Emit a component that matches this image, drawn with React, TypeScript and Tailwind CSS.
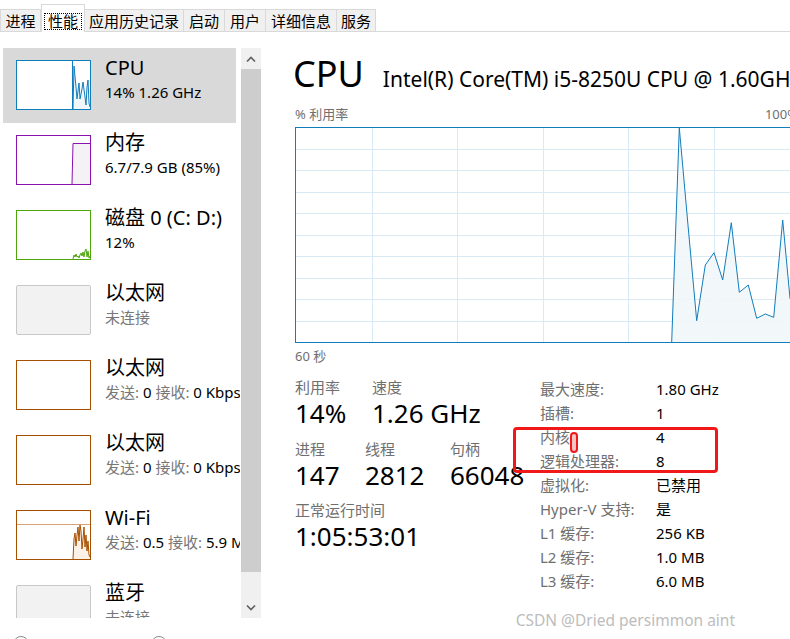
import React from 'react';

const tabs = [
  { label: '进程', w: 'w-[41px]' },
  { label: '性能', w: 'w-[44px]', active: true },
  { label: '应用历史记录', w: 'w-[100px]' },
  { label: '启动', w: 'w-[42px]' },
  { label: '用户', w: 'w-[42px]' },
  { label: '详细信息', w: 'w-[72px]' },
  { label: '服务', w: 'w-[40px]' },
];

function Tabs() {
  return (
    <div className="flex h-[32px] items-end border-b border-[#d9d9d9]">
      {tabs.map((t) =>
        t.active ? (
          <div
            key={t.label}
            className={`${t.w} relative z-10 -mb-px flex h-[28px] shrink-0 items-start justify-center border border-b-0 border-[#d9d9d9] bg-white pt-[8px]`}
          >
            <span className="border border-dotted border-black px-[3px] text-[15px] leading-[15px] text-black">{t.label}</span>
          </div>
        ) : (
          <div
            key={t.label}
            className={`${t.w} -ml-px flex h-[22px] shrink-0 items-center justify-center border border-b-0 border-[#d9d9d9] bg-[#f0f0f0] text-[15px] leading-[20px] text-black first:ml-0`}
          >
            {t.label}
          </div>
        )
      )}
    </div>
  );
}

function Box({ color, children, bg = 'bg-white' }: { color: string; children?: React.ReactNode; bg?: string }) {
  return (
    <div className={`relative h-[50px] w-[75px] border ${color} ${bg}`}>
      {children}
    </div>
  );
}

const cpuThumb = (
  <Box color="border-[#117dbb]">
    <svg width="73" height="48" className="block">
      <line x1="55.5" y1="0" x2="55.5" y2="48" stroke="#117dbb" strokeWidth="1" />
      <polygon
        points="56,48 57,5 59,26 60,38 62,22 63,38 65,28 66,21 68,36 69,44 70,26 71,19 72,42 73,46 73,48"
        fill="#f1f6fa"
      />
      <polyline
        points="56,48 57,5 59,26 60,38 62,22 63,38 65,28 66,21 68,36 69,44 70,26 71,19 72,42 73,46"
        fill="none"
        stroke="#117dbb"
        strokeWidth="1"
      />
    </svg>
  </Box>
);

const memThumb = (
  <Box color="border-[#8b12ae]">
    <svg width="73" height="48" className="block">
      <polygon points="55,48 56,7 73,7 73,48" fill="#f4f2f4" />
      <polyline points="55,48 56,7.5 73,7.5" fill="none" stroke="#8b12ae" strokeWidth="1" />
    </svg>
  </Box>
);

const diskThumb = (
  <Box color="border-[#4da60c]">
    <svg width="73" height="48" className="block">
      <polyline
        points="56,48 57,44 58,46 59,43 60,46 61,45 62,47 63,44 64,42 65,45 66,41 67,46 68,40 69,38 70,46 71,40 72,47 73,45"
        fill="none"
        stroke="#4da60c"
        strokeWidth="1"
      />
    </svg>
  </Box>
);

const offThumb = <div className="h-[50px] w-[75px] rounded-[2px] border border-[#c8c8c8] bg-[#f2f2f2]" />;

const ethThumb = <Box color="border-[#a74f01]" />;

const wifiThumb = (
  <Box color="border-[#a74f01]">
    <svg width="73" height="48" className="block">
      <line x1="0" y1="13.5" x2="73" y2="13.5" stroke="#d9a375" strokeWidth="1" />
      <polygon
        points="56,48 57,28 58,22 59,35 60,24 61,16 62,30 63,14 64,20 65,38 66,28 67,16 68,36 69,24 70,40 71,30 72,44 73,46 73,48"
        fill="#fcf1e7"
      />
      <polyline
        points="56,48 57,28 58,22 59,35 60,24 61,16 62,30 63,14 64,20 65,38 66,28 67,16 68,36 69,24 70,40 71,30 72,44 73,46"
        fill="none"
        stroke="#a74f01"
        strokeWidth="1"
      />
    </svg>
  </Box>
);

const G = ({ children }: { children: React.ReactNode }) => <span className="text-[#777777]">{children}</span>;

const items = [
  { thumb: cpuThumb, title: 'CPU', sub: <span>14% 1.26 GHz</span>, selected: true },
  { thumb: memThumb, title: '内存', sub: <span>6.7/7.9 GB (85%)</span> },
  { thumb: diskThumb, title: '磁盘 0 (C: D:)', sub: <span>12%</span> },
  { thumb: offThumb, title: '以太网', sub: <G>未连接</G> },
  { thumb: ethThumb, title: '以太网', sub: <span><G>发送:</G> 0 <G>接收:</G> 0 Kbps</span> },
  { thumb: ethThumb, title: '以太网', sub: <span><G>发送:</G> 0 <G>接收:</G> 0 Kbps</span> },
  { thumb: wifiThumb, title: 'Wi-Fi', sub: <span><G>发送:</G> 0.5 <G>接收:</G> 5.9 Mbps</span> },
  { thumb: offThumb, title: '蓝牙', sub: <G>未连接</G> },
];

function Sidebar() {
  return (
    <div className="flex w-[261px] shrink-0 pl-[3px] pt-[16px]">
      <div className="h-[570px] w-[237px] overflow-hidden">
        {items.map((it, i) => (
          <div key={i} className={`flex h-[75px] w-[233px] ${it.selected ? 'bg-[#d9d9d9]' : ''}`}>
            <div className="ml-[13px] mt-[12px] shrink-0">{it.thumb}</div>
            <div className="ml-[14px] mt-[8px] whitespace-nowrap text-black">
              <div className="text-[20px] leading-[24px]">{it.title}</div>
              <div className="mt-[2px] text-[15px] leading-[20px]">{it.sub}</div>
            </div>
          </div>
        ))}
      </div>
      <div className="ml-px flex h-[570px] w-[20px] flex-col bg-[#f0f0f0]">
        <div className="flex h-[21px] items-center justify-center">
          <svg width="10" height="6"><polyline points="1,5.5 5,1.5 9,5.5" fill="none" stroke="#606060" strokeWidth="1.6" /></svg>
        </div>
        <div className="h-[503px] bg-[#cdcdcd]" />
        <div className="flex-1" />
        <div className="flex h-[20px] items-center justify-center">
          <svg width="10" height="6"><polyline points="1,0.5 5,4.5 9,0.5" fill="none" stroke="#606060" strokeWidth="1.6" /></svg>
        </div>
      </div>
    </div>
  );
}

const pts: [number, number][] = [
  [376.7, 215], [384.3, 0.8], [392.9, 97], [401.7, 193.7], [410.3, 138], [419, 125.7], [427.7, 153],
  [436.3, 95.7], [444.3, 165.3], [453.3, 158], [461.7, 191.3], [470.3, 187], [478.7, 190.3],
  [487.7, 93], [495, 171.3], [503, 190],
];

function Chart() {
  const line = pts.map((p) => p.join(',')).join(' ');
  const area = `${line} 503,215 376.7,215`;
  return (
    <svg width="503" height="216" className="block">
      {[1, 2, 3, 4, 5, 6, 7, 8, 9].map((k) => (
        <line key={k} x1="0" x2="503" y1={Math.round(k * 21.5) + 0.5} y2={Math.round(k * 21.5) + 0.5} stroke="#d9eaf4" strokeWidth="1" />
      ))}
      {[77, 162, 248, 333, 419].map((x) => (
        <line key={x} x1={x + 0.5} x2={x + 0.5} y1="0" y2="216" stroke="#d9eaf4" strokeWidth="1" />
      ))}
      <polygon points={area} fill="#f1f6fa" opacity="0.9" />
      <polyline points={line} fill="none" stroke="#117dbb" strokeWidth="1" />
      <rect x="0.5" y="0.5" width="502" height="215" fill="none" stroke="#117dbb" strokeWidth="1" />
    </svg>
  );
}

const specs: [string, string][] = [
  ['最大速度:', '1.80 GHz'],
  ['插槽:', '1'],
  ['内核:', '4'],
  ['逻辑处理器:', '8'],
  ['虚拟化:', '已禁用'],
  ['Hyper-V 支持:', '是'],
  ['L1 缓存:', '256 KB'],
  ['L2 缓存:', '1.0 MB'],
  ['L3 缓存:', '6.0 MB'],
];

function Stat({ label, value, w }: { label: string; value: string; w: string }) {
  return (
    <div className={`${w} shrink-0 whitespace-nowrap`}>
      <div className="text-[15px] leading-[20px] text-[#6f6f6f]">{label}</div>
      <div className="text-[26px] leading-[32px] text-black">{value}</div>
    </div>
  );
}

function Main() {
  return (
    <div className="relative flex-1 overflow-hidden pl-[32px] pt-[20px]">
      <div className="flex items-baseline whitespace-nowrap text-black">
        <span className="text-[36px] leading-[44px]">CPU</span>
        <span className="ml-[19px] text-[21px] leading-[24px]">Intel(R) Core(TM) i5-8250U CPU @ 1.60GHz</span>
      </div>
      <div className="ml-[2px] mt-[9px] flex w-[503px] justify-between text-[13px] leading-[18px] text-[#6f6f6f]">
        <span>% 利用率</span>
        <span>100%</span>
      </div>
      <div className="ml-[2px] mt-[4px]">
        <Chart />
      </div>
      <div className="ml-[2px] mt-[4px] text-[13px] leading-[18px] text-[#6f6f6f]">60 秒</div>

      <div className="ml-[2px] mt-[12px] flex">
        <div className="w-[245px] shrink-0">
          <div className="flex">
            <Stat label="利用率" value="14%" w="w-[77px]" />
            <Stat label="速度" value="1.26 GHz" w="w-[150px]" />
          </div>
          <div className="mt-[10px] flex">
            <Stat label="进程" value="147" w="w-[70px]" />
            <Stat label="线程" value="2812" w="w-[85px]" />
            <Stat label="句柄" value="66048" w="w-[90px]" />
          </div>
          <div className="mt-[9px]">
            <Stat label="正常运行时间" value="1:05:53:01" w="w-[200px]" />
          </div>
        </div>
        <div className="relative">
          {specs.map(([k, v]) => (
            <div key={k} className="flex h-[24px] items-center whitespace-nowrap text-[15px]">
              <span className="w-[116px] text-[#6f6f6f]">{k}</span>
              <span className="text-black">{v}</span>
            </div>
          ))}
          <div className="absolute left-[-27px] top-[50px] h-[46px] w-[205px] rounded-[4px] border-[3px] border-[#f01818]" />
          <div className="absolute left-[30px] top-[55px] h-[21px] w-[8px] rounded-full border-2 border-[#f01818] bg-[#f7c4c4]" />
        </div>
      </div>
    </div>
  );
}

export default function App() {
  return (
    <div className="relative h-[639px] w-[790px] overflow-hidden bg-white font-['Noto_Sans','Noto_Sans_CJK_SC',sans-serif]">
      <Tabs />
      <div className="flex h-[598px]">
        <Sidebar />
        <Main />
      </div>
      <div className="flex pt-[6px]">
        <div className="ml-[13px] h-[16px] w-[16px] rounded-full border-[1.5px] border-[#8a8a8a]" />
        <div className="ml-[122px] h-[16px] w-[16px] rounded-full border-[1.5px] border-[#8a8a8a]" />
      </div>
      <div className="absolute bottom-[9px] right-[55px] text-[15.5px] leading-[20px] text-[#bdbdbd]">CSDN @Dried persimmon aint</div>
    </div>
  );
}
